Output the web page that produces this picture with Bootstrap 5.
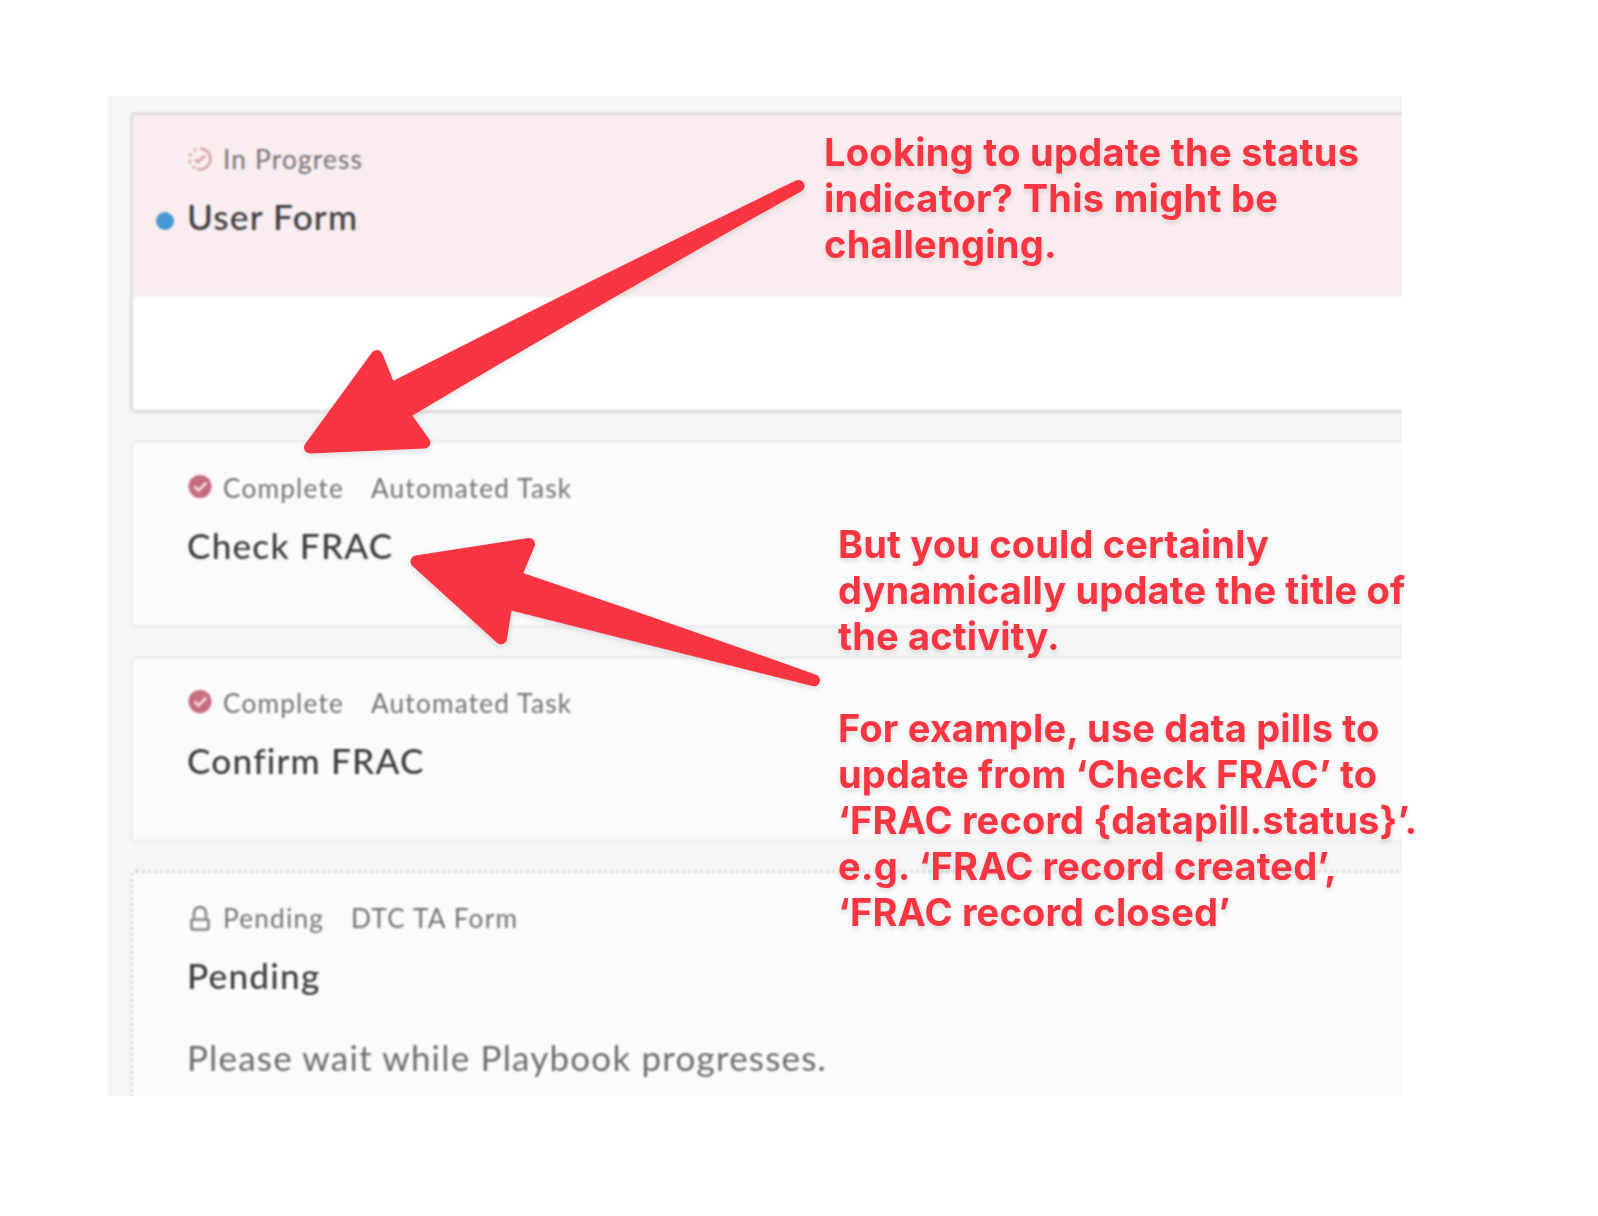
<!DOCTYPE html>
<html lang="en">
<head>
    <meta charset="UTF-8">
    <meta name="viewport" content="width=device-width, initial-scale=1.0">
    <title>Playbook Activities</title>
    <!-- Bootstrap CSS -->
    <link href="https://cdn.jsdelivr.net/npm/bootstrap@5.3.0/dist/css/bootstrap.min.css" rel="stylesheet">
    <style>
        body { background: #fff; font-family: Lato, "Liberation Sans", sans-serif; }
        .stage { width: 1598px; height: 1216px; padding: 96px 0 0 107px; }
        .playbook { width: 1295px; height: 1000px; padding: 16px 0 0 23px; background: #f6f5f6; }
        .activity-list { width: 1300px; filter: blur(1px); letter-spacing: 1.2px; }
        .activity { border: 3px solid #ececed; border-radius: 6px 0 0 6px; background: #fbfbfb; height: 188px; padding: 28px 0 0 54px; margin-bottom: 27px; }
        .activity-active { height: 301px; padding: 0; background: #fff; border-color: #e1dddf; }
        .activity-check { padding-top: 29px; margin-bottom: 28px; }
        .activity-confirm { height: 187px; }
        .activity-head { height: 182px; padding: 28px 0 0 54px; background: #f9edef; }
        .activity-pending { height: 300px; padding-top: 29px; border: 3px dotted #d8d6d8; }
        .status-line { height: 32px; line-height: 32px; font-size: 26.2px; color: #737176; margin-bottom: 20px; }
        .status-line svg { width: 26px; height: 26px; margin-right: 10px; }
        .status-kind { margin-left: 27px; }
        .activity-title { font-size: 35.2px; line-height: 42px; font-weight: 500; color: #3c3c3e; margin: 0; }
        .activity-text { font-size: 35px; line-height: 42px; color: #6d6d6f; margin: 40px 0 0; }
        .unread-dot { width: 18px; height: 18px; left: -31px; top: 17px; background: #4a98d3; }
        .annotation { font-family: Inter, "Liberation Sans", sans-serif; font-size: 38px; line-height: 46px; font-weight: 700; color: #f93542; white-space: nowrap; text-shadow: 0 3px 5px rgba(0, 0, 0, .13); }
        .note-status { left: 824px; top: 129px; letter-spacing: .28px; }
        .note-title { left: 838px; top: 521px; letter-spacing: .16px; }
        .arrows { filter: drop-shadow(0 2px 3px rgba(0, 0, 0, .12)); }
    </style>
</head>
<body>
<div class="stage position-relative overflow-hidden">
    <!-- Activity list -->
    <div class="playbook overflow-hidden">
        <div class="activity-list">
            <div class="activity activity-active">
                <div class="activity-head">
                    <div class="status-line d-flex align-items-center">
                        <svg viewBox="0 0 26 26" fill="none" stroke="#d3a3ac" stroke-width="2.6">
                            <path d="M13 2.5a10.5 10.5 0 1 1-3 20.6"/>
                            <path d="M9.5 3.1a10.5 10.5 0 0 0-7 10.9 10.5 10.5 0 0 0 5.5 8" stroke-dasharray="3 4"/>
                            <path d="M8 13.5l3 2.5 7-6.5"/>
                        </svg>
                        <span>In Progress</span>
                    </div>
                    <h2 class="activity-title position-relative"><span class="unread-dot position-absolute rounded-circle"></span>User Form</h2>
                </div>
            </div>
            <div class="activity activity-check">
                <div class="status-line d-flex align-items-center">
                    <svg viewBox="0 0 26 26"><circle cx="13" cy="11.5" r="11.5" fill="#c56d7e"/><path d="M7.5 11.5l4 4 8-8" fill="none" stroke="#f5d5db" stroke-width="3"/></svg>
                    <span>Complete</span>
                    <span class="status-kind">Automated Task</span>
                </div>
                <h2 class="activity-title">Check FRAC</h2>
            </div>
            <div class="activity activity-confirm">
                <div class="status-line d-flex align-items-center">
                    <svg viewBox="0 0 26 26"><circle cx="13" cy="11.5" r="11.5" fill="#c56d7e"/><path d="M7.5 11.5l4 4 8-8" fill="none" stroke="#f5d5db" stroke-width="3"/></svg>
                    <span>Complete</span>
                    <span class="status-kind">Automated Task</span>
                </div>
                <h2 class="activity-title">Confirm FRAC</h2>
            </div>
            <div class="activity activity-pending">
                <div class="status-line d-flex align-items-center">
                    <svg viewBox="0 0 26 26" fill="none" stroke="#858487" stroke-width="2.6"><rect x="4.5" y="14.5" width="17" height="10" rx="2"/><path d="M7 14.5V8a6 6 0 0 1 12 0v6.5"/></svg>
                    <span>Pending</span>
                    <span class="status-kind">DTC TA Form</span>
                </div>
                <h2 class="activity-title">Pending</h2>
                <p class="activity-text">Please wait while Playbook progresses.</p>
            </div>
        </div>
    </div>

    <!-- Arrows -->
    <svg class="arrows position-absolute top-0 start-0" width="1598" height="1216" fill="#f93542" stroke="#f93542" stroke-width="12" stroke-linejoin="round">
        <path d="M798.5 186Q594 285 390.3 389.2L376.8 356 310 447.5 424.3 442.5 403.6 413.8Q598 298 798.5 186z"/>
        <path d="M814 680.3Q664 627 515.2 576.8L529 544 416.5 561.5 501 638.3 506.6 603.1Q660 641 814 680.3z"/>
    </svg>

    <!-- Annotations -->
    <div class="annotation note-status position-absolute">Looking to update the status<br>indicator? This might be<br>challenging.</div>
    <div class="annotation note-title position-absolute">But you could certainly<br>dynamically update the title of<br>the activity.<br><br>For example, use data pills to<br>update from ‘Check FRAC’ to<br>‘FRAC record {datapill.status}’.<br>e.g. ‘FRAC record created’,<br>‘FRAC record closed’</div>
</div>

<!-- Bootstrap JS -->
<script src="https://cdn.jsdelivr.net/npm/bootstrap@5.3.0/dist/js/bootstrap.bundle.min.js"></script>
</body>
</html>
